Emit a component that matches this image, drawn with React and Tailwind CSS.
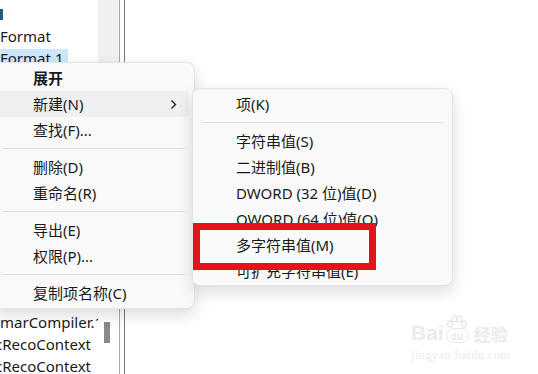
import React from 'react';

const uiFont = {
  fontFamily: '"Noto Sans", "Noto Sans CJK SC", sans-serif',
};

const treeRows = [
  { key: 'r1', mark: true },
  { key: 'r2', text: 'Format' },
  { key: 'r3', text: 'Format.1', selected: true },
  ...Array.from({ length: 11 }, (_, i) => ({ key: `gap${i}` })),
  { key: 'r15', text: 'marCompiler.1' },
  { key: 'r16', text: 'cRecoContext', clip: true },
  { key: 'r17', text: 'cRecoContext', clip: true },
];

const mainMenu = [
  { label: '展开', bold: true },
  { label: '新建(N)', active: true, arrow: true },
  { label: '查找(F)...' },
  { sep: true },
  { label: '删除(D)' },
  { label: '重命名(R)' },
  { sep: true },
  { label: '导出(E)' },
  { label: '权限(P)...' },
  { sep: true },
  { label: '复制项名称(C)' },
];

const subMenu = [
  { label: '项(K)' },
  { sep: true },
  { label: '字符串值(S)' },
  { label: '二进制值(B)' },
  { label: 'DWORD (32 位)值(D)' },
  { label: 'QWORD (64 位)值(Q)' },
  { label: '多字符串值(M)' },
  { label: '可扩充字符串值(E)' },
];

const Chevron = () => (
  <svg width="7" height="11" viewBox="0 0 7 11" fill="none">
    <path d="M1.5 1.5 L5.5 5.5 L1.5 9.5" stroke="#1f1f1f" strokeWidth="1.3" />
  </svg>
);

const MenuList = ({ items, padLeft }) => (
  <>
    {items.map((item, i) =>
      item.sep ? (
        <div key={i} className="h-[11px] flex items-center px-[9px]">
          <div className="h-px w-full bg-[#e1e1e1]" />
        </div>
      ) : (
        <div
          key={i}
          className={`h-[26px] mx-[5px] rounded-[4px] flex items-center justify-between pr-[12px] ${
            item.active ? 'bg-[#f0f0f0]' : ''
          }`}
          style={{ paddingLeft: padLeft }}
        >
          <span
            className={`text-[15px] leading-none text-[#1a1a1a] whitespace-nowrap ${
              item.bold ? 'font-bold' : ''
            }`}
          >
            {item.label}
          </span>
          {item.arrow && <Chevron />}
        </div>
      )
    )}
  </>
);

// faint baidu jingyan watermark, bottom right
const Watermark = () => (
  <div className="absolute left-[411px] top-[315px] flex flex-col items-start text-[#ebebeb] select-none whitespace-nowrap">
    <div className="flex items-end">
      <span
        className="text-[21px] font-bold leading-none"
        style={{ fontFamily: '"Liberation Sans", sans-serif' }}
      >
        Bai
      </span>
      <div className="flex flex-col items-center ml-[2px]">
        <svg width="22" height="13" viewBox="0 0 22 13">
          <ellipse cx="4" cy="9" rx="2.4" ry="3" fill="none" stroke="#e6e6e6" strokeWidth="1.3" />
          <ellipse cx="8.5" cy="4" rx="2.4" ry="3" fill="none" stroke="#e6e6e6" strokeWidth="1.3" />
          <ellipse cx="13.5" cy="4" rx="2.4" ry="3" fill="none" stroke="#e6e6e6" strokeWidth="1.3" />
          <ellipse cx="18" cy="9" rx="2.4" ry="3" fill="none" stroke="#e6e6e6" strokeWidth="1.3" />
        </svg>
        <div className="w-[23px] h-[15px] rounded-full border-[1.5px] border-[#e6e6e6] flex items-center justify-center text-[10px] font-bold leading-none">
          du
        </div>
      </div>
      <span className="text-[17px] font-bold leading-none ml-[5px]" style={uiFont}>
        经验
      </span>
    </div>
    <span
      className="text-[12px] leading-none mt-[6px] tracking-[0.6px]"
      style={{ fontFamily: '"Liberation Serif", serif' }}
    >
      jingyan.baidu.com
    </span>
  </div>
);

const App = () => {
  return (
    <div className="relative w-[538px] h-[374px] overflow-hidden bg-white" style={uiFont}>
      <div className="flex h-full">
        {/* tree pane */}
        <div className="w-[98px] h-full overflow-hidden pt-[3px]">
          {treeRows.map((row) => (
            <div key={row.key} className="h-[22px] flex items-center whitespace-nowrap">
              {row.mark && <div className="w-[3px] h-[11px] bg-[#1d5a86]" />}
              {row.text && (
                <span
                  className={`text-[15px] leading-[18px] text-[#1a1a1a] pr-[4px] ${
                    row.selected ? 'bg-[#cce8ff]' : ''
                  } ${row.clip ? '-ml-[5px]' : ''}`}
                >
                  {row.text}
                </span>
              )}
            </div>
          ))}
        </div>
        {/* scrollbar */}
        <div className="w-[21px] h-full flex flex-col">
          <div className="h-[62px] bg-[#f0f0f0]" />
          <div className="flex-1 flex flex-col items-center pt-[260px]">
            <div className="w-[6px] h-[21px] bg-[#8a8a8a] -ml-[4px]" />
          </div>
        </div>
        <div className="w-px h-full bg-[#a8a8a8]" />
        <div className="w-[4px] h-full" />
        <div className="w-px h-full bg-[#7a7a7a]" />
        <div className="flex-1 h-full bg-white" />
      </div>

      <Watermark />

      {/* context menu */}
      <div className="absolute left-[-8px] top-[62px] w-[203px] bg-[#f9f9f9] border border-[#e3e3e3] rounded-[8px] pt-[2px] pb-[2px] shadow-[0_6px_16px_rgba(0,0,0,0.14)]">
        <MenuList items={mainMenu} padLeft={35} />
      </div>

      {/* submenu */}
      <div className="absolute left-[192px] top-[88px] w-[261px] bg-[#f9f9f9] border border-[#e3e3e3] rounded-[8px] pt-[2px] pb-[1px] shadow-[0_6px_16px_rgba(0,0,0,0.14)]">
        <MenuList items={subMenu} padLeft={38} />
      </div>

      {/* annotation */}
      <div className="absolute left-[193px] top-[223px] w-[183px] h-[47px] border-[7px] border-[#e5121a]" />
    </div>
  );
};

export default App;
